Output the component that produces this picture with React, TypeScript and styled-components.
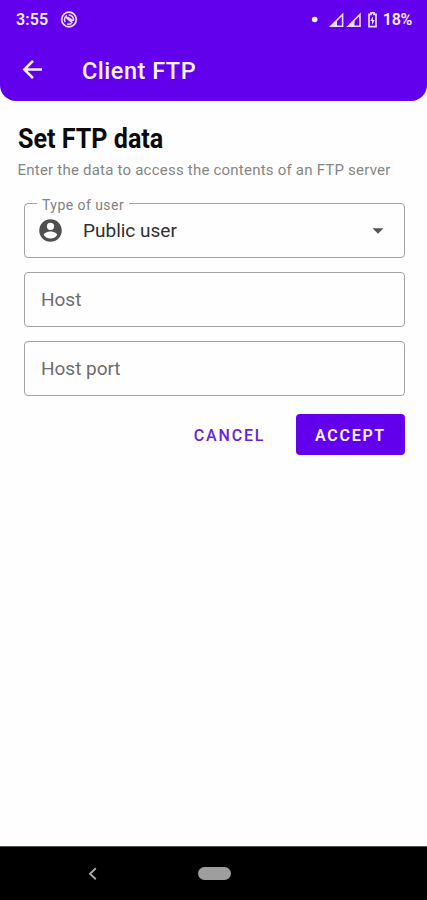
import React from "react";
import styled, { createGlobalStyle } from "styled-components";

const GlobalStyle = createGlobalStyle`
  * { box-sizing: border-box; }
  body { margin: 0; background: #fff; font-family: Roboto, "Liberation Sans", sans-serif; }
  button, input { font-family: inherit; }
`;

const Screen = styled.div`
  width: 427px;
  height: 900px;
  display: flex;
  flex-direction: column;
  background: #fefefe;
  overflow: hidden;
`;

const Header = styled.header`
  height: 100.5px;
  flex: none;
  background: #6200ee;
  color: #fff;
  border-radius: 0 0 16px 16px;
`;

const StatusBar = styled.div`
  height: 39px;
  display: flex;
  align-items: center;
  padding: 0 15px 0 16px;
`;

const StatusText = styled.span<{ $spacing: number }>`
  font-size: 16px;
  font-weight: 600;
  line-height: 20px;
  letter-spacing: ${(p) => p.$spacing}px;
  color: #f3eaff;
  white-space: nowrap;
`;

const StatusIcons = styled.div`
  margin-left: auto;
  margin-right: 3px;
  display: flex;
`;

const NoticeIcon = styled.svg`
  margin-left: 12px;
`;

const AppBar = styled.div`
  height: 61px;
  display: flex;
  align-items: center;
  padding-left: 20px;
`;

const AppTitle = styled.h1`
  margin: 3px 0 0 36px;
  font-size: 23.5px;
  font-weight: 500;
  line-height: 28px;
  letter-spacing: 0.5px;
  color: #f8f2ff;
`;

const Content = styled.main`
  flex: 1;
  padding: 22px 22px 0 18px;
`;

const Heading = styled.h2`
  margin: 0;
  width: max-content;
  font-size: 27px;
  font-weight: 700;
  line-height: 32px;
  color: #0b0b0b;
  transform: scaleX(0.93);
  transform-origin: left;
`;

const Subtitle = styled.p`
  margin: 5px 0 0 -0.5px;
  font-size: 15px;
  line-height: 20px;
  letter-spacing: 0.22px;
  color: #858585;
  white-space: nowrap;
`;

const Form = styled.form`
  margin: 23px 0 0 6px;
  width: 381px;
  display: flex;
  flex-direction: column;
  gap: 14px;
`;

const Field = styled.div`
  position: relative;
  height: 55px;
  display: flex;
  align-items: center;
  padding: 2px 17px 0 16px;
  border: 1px solid #a3a3a3;
  border-radius: 4px;
`;

const FloatingLabel = styled.span`
  position: absolute;
  left: 12px;
  top: -8px;
  padding: 0 5px;
  background: #fefefe;
  font-size: 14px;
  line-height: 18px;
  letter-spacing: 0.45px;
  color: #828282;
`;

const UserIcon = styled.svg`
  margin: -1px 0 0 -4px;
  flex: none;
`;

const Value = styled.span`
  flex: 1;
  margin: 0 0 0 19px;
  font-size: 19px;
  line-height: 24px;
  color: #303030;
`;

const Placeholder = styled.span`
  font-size: 19px;
  line-height: 24px;
  letter-spacing: -0.02px;
  color: #6d6d6d;
`;

const Actions = styled.div`
  display: flex;
  justify-content: flex-end;
  margin-top: 4px;
  gap: 12px;
`;

const ActionButton = styled.button<{ $filled?: boolean }>`
  width: ${(p) => (p.$filled ? 109 : 109)}px;
  height: 41px;
  padding: 2px 0 0;
  border: 0;
  border-radius: 4px;
  font-size: 16px;
  font-weight: ${(p) => (p.$filled ? 600 : 500)};
  letter-spacing: ${(p) => (p.$filled ? 1.7 : 1.85)}px;
  color: ${(p) => (p.$filled ? "#f8f2ff" : "#6425dd")};
  background: ${(p) => (p.$filled ? "#6200ee" : "transparent")};
`;

const NavBar = styled.nav`
  height: 54px;
  flex: none;
  display: flex;
  align-items: center;
  padding-left: 87px;
  background: #000;
  border-top: 1px solid #4b5053;
`;

const HomePill = styled.span`
  width: 33px;
  height: 13px;
  margin-left: 101px;
  border-radius: 7px;
  background: #9e9e9e;
`;

export default function App() {
  return (
    <Screen>
      <GlobalStyle />
      <Header>
        <StatusBar>
          <StatusText $spacing={0.1}>3:55</StatusText>
          <NoticeIcon width="18" height="18" viewBox="0 0 18 18" fill="none" stroke="#eadcff">
            <circle cx="9" cy="8.5" r="7.3" strokeWidth="1.8" />
            <path d="M5.2 11.1A4.6 4.6 0 0 1 7 4.5M8.7 3.9a4.6 4.6 0 0 1 4.5 6.1M11.5 12.4a4.6 4.6 0 0 1-4.3.3" strokeWidth="1.5" />
            <path d="M5.7 5.9l6.7 6M7.4 6.2l4.7 3.1-2.6.4" strokeWidth="1.8" />
          </NoticeIcon>
          <StatusIcons>
            <svg width="69" height="18" viewBox="0 0 69 18" fill="none" stroke="#eadcff">
              <circle cx="3.7" cy="8.5" r="2.8" fill="#f8f2ff" stroke="none" />
              <path d="M19.8 15.2L31.6 3.4v11.8zM37.2 15.2L49 3.4v11.8z" strokeWidth="1.6" />
              <path d="M18.5 16l7.5-7.3V16zM36 16l7.5-7.3V16z" fill="#eadcff" stroke="none" />
              <path d="M58 3.3h2V1.9h3v1.4h2v12.3h-7z" strokeWidth="1.7" />
              <path d="M62 5.2l-2.7 4.8H61v4l2.7-5H62z" fill="#eadcff" stroke="none" />
            </svg>
          </StatusIcons>
          <StatusText $spacing={-0.3}>18%</StatusText>
        </StatusBar>
        <AppBar>
          <svg width="26" height="26" viewBox="0 0 26 26" fill="none" stroke="#f8f2ff" strokeWidth="2.6">
            <path d="M22 12.5H4.5M13 3.8L4.3 12.5l8.7 8.7" />
          </svg>
          <AppTitle>Client FTP</AppTitle>
        </AppBar>
      </Header>
      <Content>
        <Heading>Set FTP data</Heading>
        <Subtitle>Enter the data to access the contents of an FTP server</Subtitle>
        <Form onSubmit={(e) => e.preventDefault()}>
          <Field>
            <FloatingLabel>Type of user</FloatingLabel>
            <UserIcon width="27" height="27" viewBox="0 0 24 24" fill="#505050">
              <path d="M12 2a10 10 0 1 0 0 20 10 10 0 0 0 0-20zm0 3a3.25 3.25 0 1 1 0 6.5A3.25 3.25 0 0 1 12 5zm0 14.2a7.2 7.2 0 0 1-6-3.2c0-2 4-3.1 6-3.1s6 1.1 6 3.1a7.2 7.2 0 0 1-6 3.2z" />
            </UserIcon>
            <Value>Public user</Value>
            <svg width="18" height="12" viewBox="0 0 18 12">
              <path d="M3.5 3.3h11L9 8.7z" fill="#555" />
            </svg>
          </Field>
          <Field>
            <Placeholder>Host</Placeholder>
          </Field>
          <Field>
            <Placeholder>Host port</Placeholder>
          </Field>
          <Actions>
            <ActionButton type="button">CANCEL</ActionButton>
            <ActionButton type="submit" $filled>
              ACCEPT
            </ActionButton>
          </Actions>
        </Form>
      </Content>
      <NavBar>
        <svg width="10" height="14" viewBox="0 0 10 14" fill="none" stroke="#a8a8a8" strokeWidth="1.9">
          <path d="M8.8 1.2L3 6.7l5.8 5.5" />
        </svg>
        <HomePill />
      </NavBar>
    </Screen>
  );
}
